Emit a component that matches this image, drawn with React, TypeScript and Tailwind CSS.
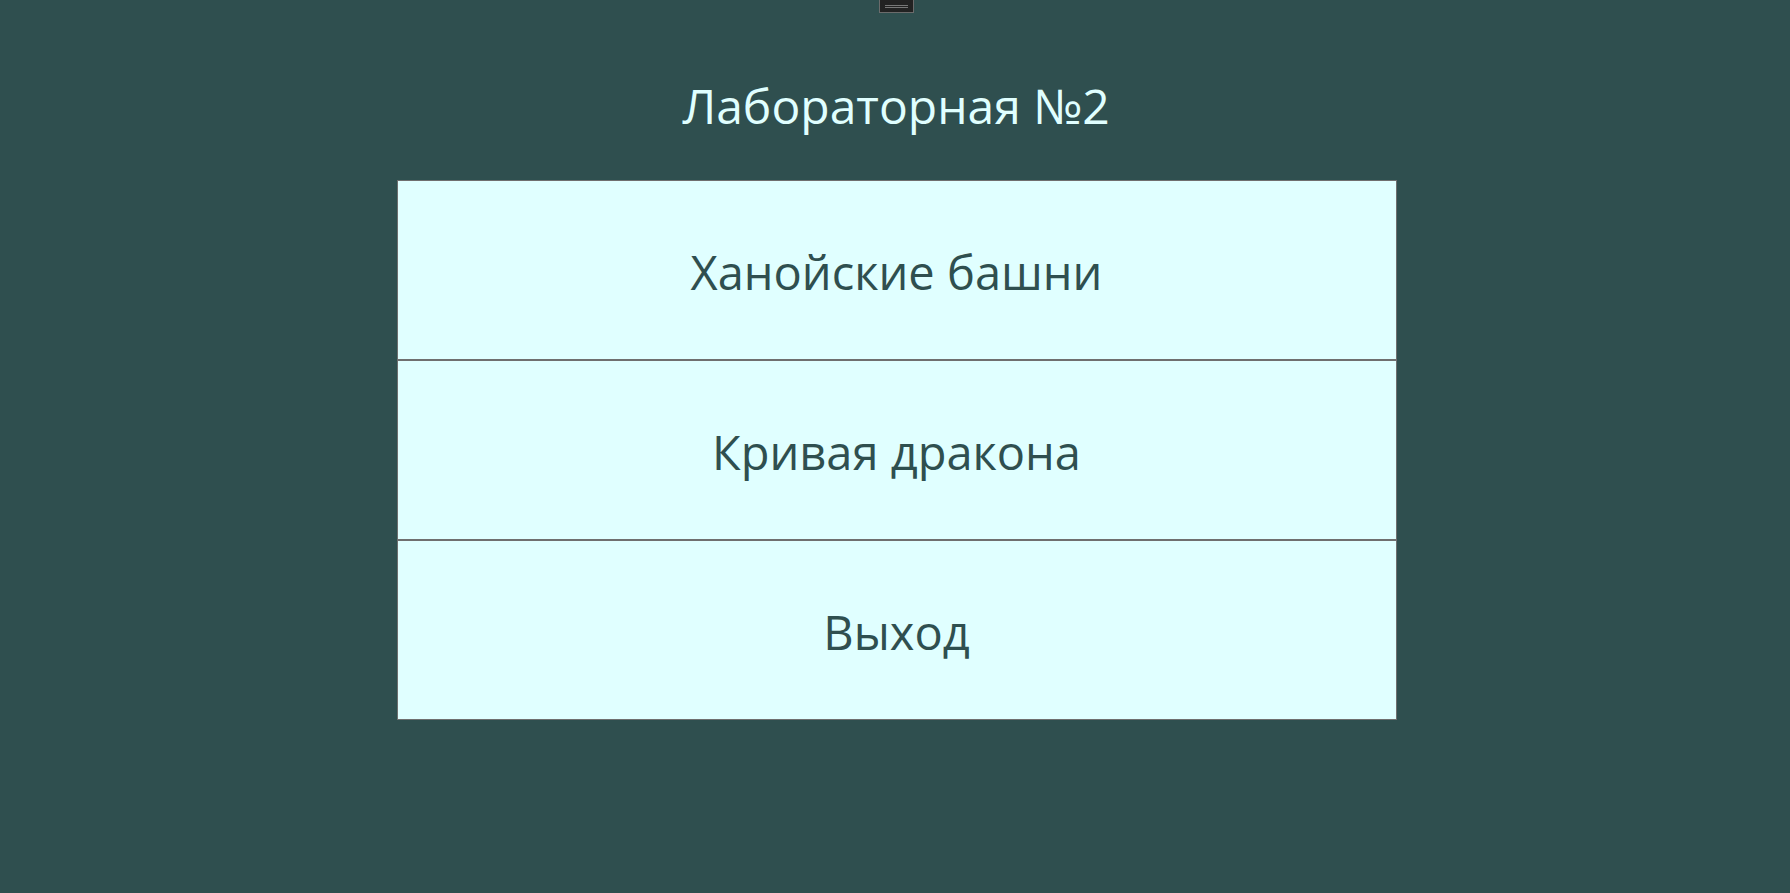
import React from 'react';

const items = ['Ханойские башни', 'Кривая дракона', 'Выход'];

export default function App() {
  return (
    <div
      className="relative min-h-[893px] w-full bg-[#2f4f4f] flex flex-col items-center"
      style={{ fontFamily: '"Open Sans", "Noto Sans", sans-serif' }}
    >
      {/* resize handle */}
      <div className="absolute left-[879px] top-0 w-[35px] h-[13px] bg-[#222] border border-t-0 border-[#6b6b6b] flex flex-col items-center justify-center gap-[1px]">
        <div className="w-[23px] h-px bg-[#777]" />
        <div className="w-[23px] h-px bg-[#777]" />
      </div>

      <h1 className="mt-[72px] h-[72px] text-[48px] leading-[68px] text-[#e0ffff] pl-[2px]">Лабораторная №2</h1>

      <div className="mt-[36px] ml-[3px] w-[1000px] border border-[#6f6f6f] bg-[#e0ffff] flex flex-col">
        {items.map((t, i) => (
          <button
            key={t}
            className={`flex items-center justify-center pt-[5px] text-[47px] text-[#2f4f4f] ${i > 0 ? 'h-[180px] border-t-2 border-[#6f6f6f]' : 'h-[178px]'}`}
          >
            {t}
          </button>
        ))}
      </div>
    </div>
  );
}
